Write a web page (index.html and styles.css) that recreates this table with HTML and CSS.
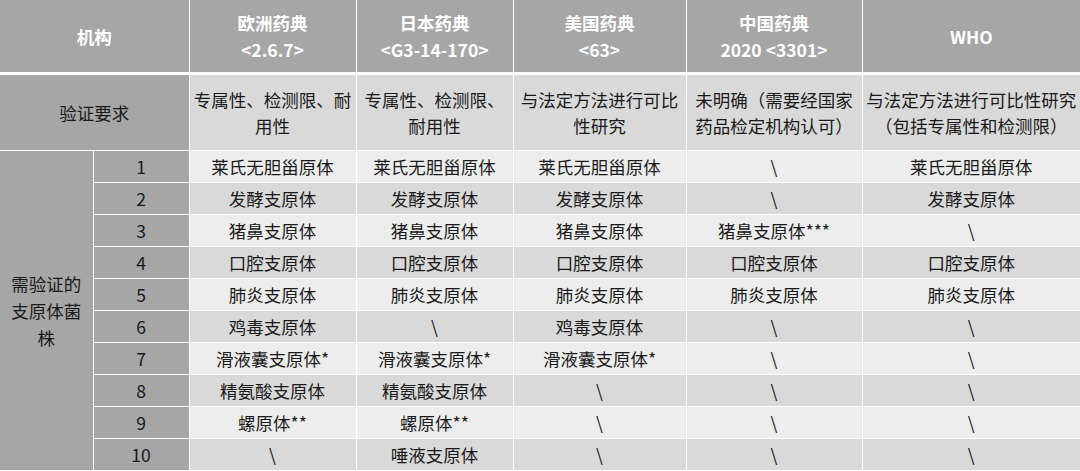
FILE: index.html
```html
<!DOCTYPE html>
<html lang="zh-CN">
<head>
<meta charset="utf-8">
<title>支原体检查方法验证要求比较</title>
<link rel="stylesheet" href="styles.css">
</head>
<body>
<table class="cmp">
  <colgroup>
    <col class="c-a"><col class="c-b"><col class="c-ep"><col class="c-jp"><col class="c-usp"><col class="c-cp"><col class="c-who">
  </colgroup>
  <thead>
    <tr class="head">
      <th colspan="2">机构</th>
      <th>欧洲药典<br>&lt;2.6.7&gt;</th>
      <th>日本药典<br>&lt;G3-14-170&gt;</th>
      <th>美国药典<br>&lt;63&gt;</th>
      <th>中国药典<br>2020 &lt;3301&gt;</th>
      <th>WHO</th>
    </tr>
  </thead>
  <tbody>
    <tr class="req">
      <td class="label" colspan="2">验证要求</td>
      <td>专属性、检测限、耐<br>用性</td>
      <td>专属性、检测限、<br>耐用性</td>
      <td>与法定方法进行可比<br>性研究</td>
      <td>未明确（需要经国家<br>药品检定机构认可）</td>
      <td>与法定方法进行可比性研究<br>（包括专属性和检测限）</td>
    </tr>
    <tr class="row light">
      <td class="label big" rowspan="10">需验证的<br>支原体菌<br>株</td>
      <td class="label">1</td>
      <td>莱氏无胆甾原体</td><td>莱氏无胆甾原体</td><td>莱氏无胆甾原体</td><td>\</td><td>莱氏无胆甾原体</td>
    </tr>
    <tr class="row dark">
      <td class="label">2</td>
      <td>发酵支原体</td><td>发酵支原体</td><td>发酵支原体</td><td>\</td><td>发酵支原体</td>
    </tr>
    <tr class="row light">
      <td class="label">3</td>
      <td>猪鼻支原体</td><td>猪鼻支原体</td><td>猪鼻支原体</td><td>猪鼻支原体***</td><td>\</td>
    </tr>
    <tr class="row dark">
      <td class="label">4</td>
      <td>口腔支原体</td><td>口腔支原体</td><td>口腔支原体</td><td>口腔支原体</td><td>口腔支原体</td>
    </tr>
    <tr class="row light">
      <td class="label">5</td>
      <td>肺炎支原体</td><td>肺炎支原体</td><td>肺炎支原体</td><td>肺炎支原体</td><td>肺炎支原体</td>
    </tr>
    <tr class="row dark">
      <td class="label">6</td>
      <td>鸡毒支原体</td><td>\</td><td>鸡毒支原体</td><td>\</td><td>\</td>
    </tr>
    <tr class="row light">
      <td class="label">7</td>
      <td>滑液囊支原体*</td><td>滑液囊支原体*</td><td>滑液囊支原体*</td><td>\</td><td>\</td>
    </tr>
    <tr class="row dark">
      <td class="label">8</td>
      <td>精氨酸支原体</td><td>精氨酸支原体</td><td>\</td><td>\</td><td>\</td>
    </tr>
    <tr class="row light">
      <td class="label">9</td>
      <td>螺原体**</td><td>螺原体**</td><td>\</td><td>\</td><td>\</td>
    </tr>
    <tr class="row dark">
      <td class="label">10</td>
      <td>\</td><td>唾液支原体</td><td>\</td><td>\</td><td>\</td>
    </tr>
  </tbody>
</table>
</body>
</html>
```
FILE: styles.css
```css
html, body {
  margin: 0;
  padding: 0;
  background: #ffffff;
}

.cmp {
  width: 1080px;
  table-layout: fixed;
  border-collapse: collapse;
  font-family: "Noto Sans CJK SC", "Noto Sans", sans-serif;
  font-size: 17.5px;
  color: #1a1a1a;
}

.c-a { width: 93px; }
.c-b { width: 96px; }
.c-ep { width: 167px; }
.c-jp { width: 157px; }
.c-usp { width: 173px; }
.c-cp { width: 176px; }
.c-who { width: 218px; }

.cmp th,
.cmp td {
  border: 1px solid #ffffff;
  padding: 0 2px;
  text-align: center;
  vertical-align: middle;
  white-space: nowrap;
}

.head th {
  background: #a6a6a6;
  color: #ffffff;
  font-weight: 700;
  height: 72px;
  line-height: 27px;
  border-top: 0;
  border-bottom: 3px solid #ffffff;
}

.head th:first-child { border-left: 0; }
.head th:last-child { border-right: 0; }

.req td {
  height: 75px;
  line-height: 26px;
  background: #d9d9d9;
}

.row td {
  height: 31px;
  line-height: 26px;
}

.light td { background: #ededed; }
.dark td { background: #d9d9d9; }

.cmp td.label {
  background: #a6a6a6;
  color: #1a1a1a;
}

.cmp td.big {
  line-height: 27px;
}

.cmp td:first-child { border-left: 0; }
.cmp td:last-child { border-right: 0; }
```
